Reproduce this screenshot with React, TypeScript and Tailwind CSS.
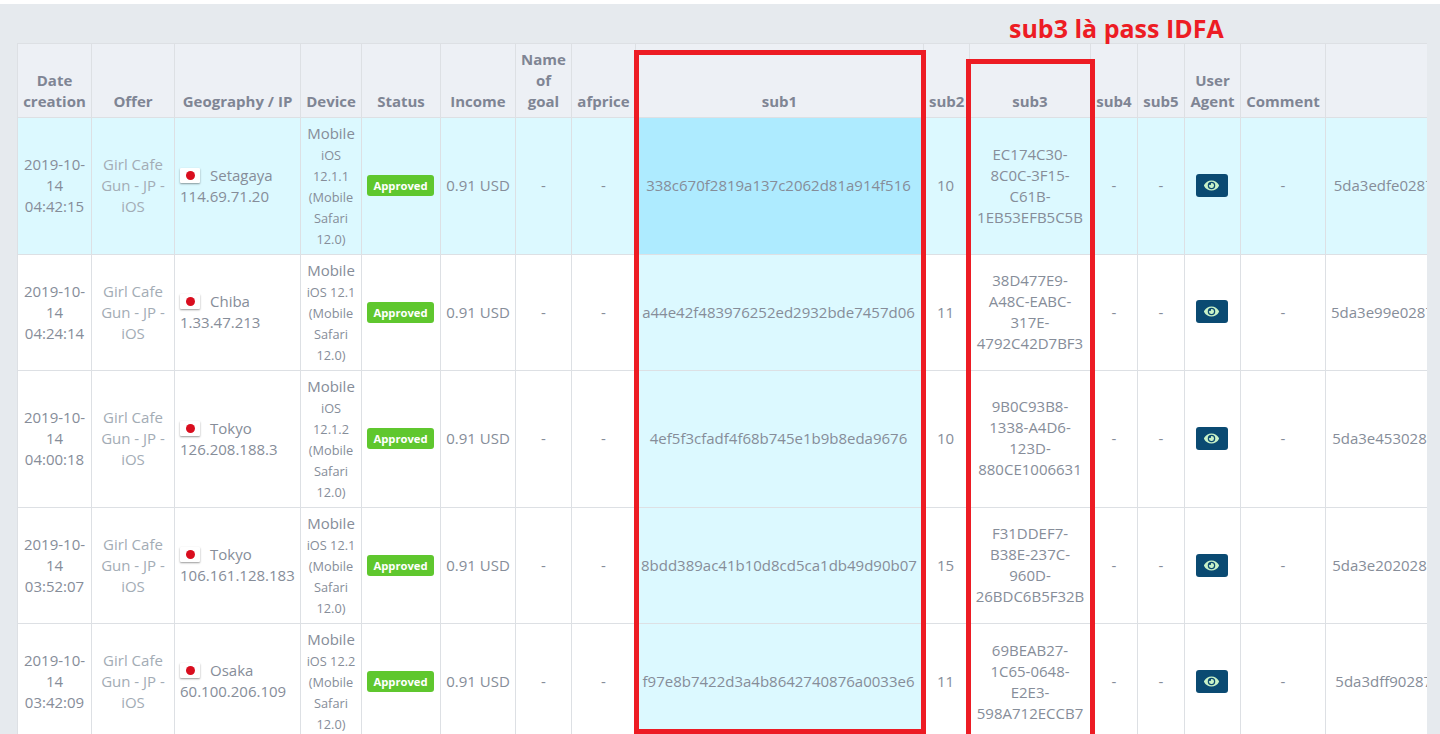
import React from "react";
import { FaEye } from "react-icons/fa";

const rows = [
  {
    date: "2019-10-14 04:42:15",
    city: "Setagaya",
    ip: "114.69.71.20",
    os: "iOS 12.1.1",
    sub1: "338c670f2819a137c2062d81a914f516",
    sub2: "10",
    sub3: "EC174C30-8C0C-3F15-C61B-1EB53EFB5C5B",
    id: "5da3edfe0287a1c40b8b4567",
  },
  {
    date: "2019-10-14 04:24:14",
    city: "Chiba",
    ip: "1.33.47.213",
    os: "iOS 12.1",
    sub1: "a44e42f483976252ed2932bde7457d06",
    sub2: "11",
    sub3: "38D477E9-A48C-EABC-317E-4792C42D7BF3",
    id: "5da3e99e0287ddd40b8b4567",
  },
  {
    date: "2019-10-14 04:00:18",
    city: "Tokyo",
    ip: "126.208.188.3",
    os: "iOS 12.1.2",
    sub1: "4ef5f3cfadf4f68b745e1b9b8eda9676",
    sub2: "10",
    sub3: "9B0C93B8-1338-A4D6-123D-880CE1006631",
    id: "5da3e4530287a1c40b8b4567",
  },
  {
    date: "2019-10-14 03:52:07",
    city: "Tokyo",
    ip: "106.161.128.183",
    os: "iOS 12.1",
    sub1: "8bdd389ac41b10d8cd5ca1db49d90b07",
    sub2: "15",
    sub3: "F31DDEF7-B38E-237C-960D-26BDC6B5F32B",
    id: "5da3e2020287a1c40b8b4567",
  },
  {
    date: "2019-10-14 03:42:09",
    city: "Osaka",
    ip: "60.100.206.109",
    os: "iOS 12.2",
    sub1: "f97e8b7422d3a4b8642740876a0033e6",
    sub2: "11",
    sub3: "69BEAB27-1C65-0648-E2E3-598A712ECCB7",
    id: "5da3dff90287a1c40b8b4567",
  },
];

const headers = [
  "Date creation",
  "Offer",
  "Geography / IP",
  "Device",
  "Status",
  "Income",
  "Name of goal",
  "afprice",
  "sub1",
  "sub2",
  "sub3",
  "sub4",
  "sub5",
  "User Agent",
  "Comment",
  "",
];

const widths = [74, 83, 126, 61, 79, 75, 56, 64, 288, 46, 121, 47, 47, 56, 85, 219];

// up = text sits 1px above the middle of its row, as it does in some rows
const td = "border border-[#dde0e4] px-[5px] pt-[5px] pb-[5px] align-middle text-center";
const up = "border border-[#dde0e4] px-[5px] pt-[4px] pb-[6px] align-middle text-center";

function Flag() {
  return (
    <span className="inline-flex h-[15px] w-[20px] items-center justify-center rounded-[1px] bg-white align-[1px] shadow-[0_1px_2px_rgba(0,0,0,0.4)]">
      <span className="h-[9px] w-[9px] rounded-full bg-[#d90d1e]" />
    </span>
  );
}

export default function App() {
  return (
    <div className="relative h-[734px] overflow-hidden bg-white pt-[4px] font-['Open_Sans',sans-serif] text-[15px] leading-[21px] text-[#868d99]">
      <div className="h-full bg-[#e6eaee] pl-[17px] pr-[13px] pt-[39px]">
        <div className="h-full overflow-hidden">
          <table className="w-[1527px] table-fixed border-collapse">
            <colgroup>
              {widths.map((w, i) => (
                <col key={i} style={{ width: w }} />
              ))}
            </colgroup>
            <thead>
              <tr className="bg-[#edf0f5]">
                {headers.map((h, i) => (
                  <th
                    key={i}
                    className="border border-[#dde0e4] p-[5px] text-center align-bottom font-bold text-[#7f8594]"
                  >
                    {h}
                  </th>
                ))}
              </tr>
            </thead>
            <tbody>
              {rows.map((r, i) => {
                const cell = i === 0 || i === 2 ? up : td;
                return (
                  <tr key={r.id} className={i === 0 ? "bg-[#dcf9ff]" : "bg-white"}>
                    <td className={cell}>{r.date}</td>
                    <td className={`${cell} text-[#a3acb5]`}>Girl Cafe Gun - JP - iOS</td>
                    <td className={`${i === 0 || i === 2 ? td : up} !text-left`}>
                      <Flag />
                      <span className="ml-[10px]">{r.city}</span>
                      <br />
                      {r.ip}
                    </td>
                    <td className={`${td} !pb-[4px]`}>
                      Mobile
                      <div className="mt-px text-[12.75px]">{r.os} (Mobile Safari 12.0)</div>
                    </td>
                    <td className={`${up} !pr-[7px]`}>
                      <span className="inline-block h-[21px] w-[67px] rounded-[3px] bg-[#5fc72e] text-center align-middle text-[11.25px] font-bold leading-[21px] text-white">
                        Approved
                      </span>
                    </td>
                    <td className={`${cell} !px-0`}>0.91 USD</td>
                    <td className={cell}>-</td>
                    <td className={cell}>-</td>
                    <td className={`${cell} !pr-[7px] ${i === 0 ? "bg-[#aeebff]" : "bg-[#dcf9ff]"}`}>{r.sub1}</td>
                    <td className={`${cell} !pr-[7px]`}>{r.sub2}</td>
                    <td className={i >= 1 && i <= 3 ? up : td}>{r.sub3}</td>
                    <td className={cell}>-</td>
                    <td className={cell}>-</td>
                    <td className={`${i <= 2 ? up : td} !pr-[7px]`}>
                      <span className="inline-flex h-[23px] w-[32px] items-center justify-center rounded-[3px] bg-[#0a4a72] align-middle text-[#c9f2c7]">
                        <FaEye size={15} />
                      </span>
                    </td>
                    <td className={cell}>-</td>
                    <td className={cell}>{r.id}</td>
                  </tr>
                );
              })}
            </tbody>
          </table>
        </div>
      </div>

      {/* annotations drawn over the table */}
      <div className="absolute left-[1009px] top-[11px] whitespace-nowrap text-[25px] font-bold leading-[34px] text-[#ed1c24]">
        sub3 là pass IDFA
      </div>
      <div className="absolute left-[634px] top-[50px] h-[684px] w-[292px] border-[5px] border-[#ed1c24]" />
      <div className="absolute left-[966px] top-[59px] h-[680px] w-[129px] border-[5px] border-[#ed1c24]" />
    </div>
  );
}
